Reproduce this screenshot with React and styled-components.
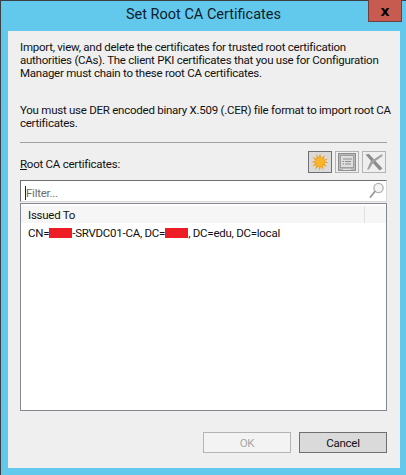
import styled, { createGlobalStyle } from "styled-components"

const GlobalStyle = createGlobalStyle`
    html, body {
        margin: 0;
        padding: 0;
        background: #63C9EC;
    }
`

const Sun = () => (
    <svg width="18" height="18" viewBox="0 0 18 18">
        <path
            d="M9 0L10.2 5L13.8 2.2L12.6 6.4L17.5 5.6L13.4 8.2L18 9.4L13.4 10.2L16 14L12 12.2L12.6 17L10 13.4L8.6 18L7.8 13.4L4 16.4L5.4 12L1 13.6L4.4 10L0 9L4.6 7.8L1.6 4L5.8 5.6L5 1L7.8 4.6Z"
            fill="#F2A31E"
        />
        <circle cx="9" cy="9" r="4.2" fill="#F9B52B" />
    </svg>
)

const Details = () => (
    <svg width="18" height="18" viewBox="0 0 18 18">
        <rect x="0.5" y="0.5" width="17" height="17" fill="#B8B8B8" stroke="#8E8E8E" />
        <rect x="2.5" y="2.5" width="13" height="12" fill="#DEDEDE" stroke="#A0A0A0" />
        <path d="M5 6H14M7 8.5H13M7 11H13" stroke="#8C8C8C" />
        <path d="M4.5 8.5H6M4.5 11H6" stroke="#8C8C8C" />
        <path d="M5 16.5H13" stroke="#E4E4E4" />
    </svg>
)

const Remove = () => (
    <svg width="18" height="18" viewBox="0 0 18 18">
        <path d="M0.5 1.5L4 1L17.5 15.5L14.5 17.5L7 9Z" fill="#8C8C8C" />
        <path d="M17 1L17.5 3L8.5 9.5L4 16.5L2 16.5L5.5 8.5Z" fill="#A2A2A2" />
    </svg>
)

const Magnifier = () => (
    <svg width="15" height="17" viewBox="0 0 15 17">
        <circle cx="9.5" cy="6" r="4.6" fill="#F4F4F4" stroke="#B4B4B4" strokeWidth="1.4" />
        <path d="M5.8 9.5L1.5 15" stroke="#9C9C9C" strokeWidth="2" strokeLinecap="round" />
    </svg>
)

const App = () => {
    return (
        <Window>
            <GlobalStyle />
            <TitleBar>
                <Title>Set Root CA Certificates</Title>
                <CloseButton>x</CloseButton>
            </TitleBar>
            <Body>
                <Description>
                    <p>
                        Import, view, and delete the certificates for trusted root certification<br />
                        authorities (CAs). The client PKI certificates that you use for Configuration<br />
                        Manager must chain to these root CA certificates.
                    </p>
                    <p>
                        You must use DER encoded binary X.509 (.CER) file format to import root CA<br />
                        certificates.
                    </p>
                </Description>
                <Separator />
                <ToolRow>
                    <Label><u>R</u>oot CA certificates:</Label>
                    <Tools>
                        <ToolButton active><Sun /></ToolButton>
                        <ToolButton><Details /></ToolButton>
                        <ToolButton><Remove /></ToolButton>
                    </Tools>
                </ToolRow>
                <FilterBox>
                    <Caret />
                    <FilterText>Filter...</FilterText>
                    <MagnifierSlot><Magnifier /></MagnifierSlot>
                </FilterBox>
                <ListBox>
                    <HeaderRow>
                        <HeaderCell>Issued To</HeaderCell>
                        <HeaderRest />
                    </HeaderRow>
                    <Row>
                        CN=<Redacted width={23} />-SRVDC01-CA, DC=<Redacted width={23} />, DC=edu, DC=local
                    </Row>
                </ListBox>
                <Footer>
                    <DialogButton disabled>OK</DialogButton>
                    <DialogButton primary>Cancel</DialogButton>
                </Footer>
            </Body>
        </Window>
    )
}

const Window = styled.div`
    box-sizing: border-box;
    width: 406px;
    height: 475px;
    display: flex;
    flex-direction: column;
    background: #63C9EC;
    border-left: 1px solid #3A3F44;
    border-top: 1px solid #3A3F44;
    font-family: Roboto, "Noto Sans", sans-serif;
    font-size: 11.5px;
    letter-spacing: -0.25px;
    color: #111;
`

const TitleBar = styled.div`
    height: 30px;
    flex-shrink: 0;
    display: flex;
    align-items: center;
    justify-content: center;
    position: relative;
`

const Title = styled.div`
    font-size: 14.5px;
    letter-spacing: 0;
    color: #10202A;
    margin-bottom: 3px;
`

const CloseButton = styled.div`
    position: absolute;
    top: -1px;
    right: 4px;
    box-sizing: border-box;
    width: 34px;
    height: 22px;
    background: #C75B50;
    border: 1px solid #6E3F40;
    border-top: none;
    display: flex;
    align-items: center;
    justify-content: center;
    font-family: "DejaVu Sans", sans-serif;
    font-weight: 700;
    font-size: 14px;
    line-height: 14px;
    color: #000;
`

const Body = styled.div`
    flex: 1;
    margin: 0 6px 7px 7px;
    background: #EFEFEF;
    padding: 10px 13px 15px 12px;
    display: flex;
    flex-direction: column;
    min-height: 0;
`

const Description = styled.div`
    height: 101px;
    flex-shrink: 0;
    line-height: 13px;
    white-space: nowrap;
    p {
        margin: 0 0 24px;
    }
`

const Separator = styled.div`
    height: 1px;
    background: #A0A0A0;
    flex-shrink: 0;
`

const ToolRow = styled.div`
    display: flex;
    align-items: center;
    justify-content: space-between;
    margin-top: 8px;
    flex-shrink: 0;
`

const Label = styled.div`
    margin-top: 4px;
`

const Tools = styled.div`
    display: flex;
    gap: 3px;
    margin-right: 1px;
`

const ToolButton = styled.div`
    box-sizing: border-box;
    width: 24px;
    height: 22px;
    display: flex;
    align-items: center;
    justify-content: center;
    background: ${props => props.active ? "#DADADA" : "#EFEFEF"};
    border: 1px solid ${props => props.active ? "#707070" : "#B4B4B4"};
`

const FilterBox = styled.div`
    box-sizing: border-box;
    height: 22px;
    margin-top: 7px;
    display: flex;
    align-items: center;
    padding: 4px 2px 0 4px;
    background: #FFF;
    border: 1px solid #D8D8D8;
    border-top-color: #6E6E6E;
    border-left-color: #6E6E6E;
    flex-shrink: 0;
`

const Caret = styled.div`
    width: 1px;
    height: 14px;
    background: #202040;
`

const FilterText = styled.div`
    flex: 1;
    color: #6D6D6D;
`

const MagnifierSlot = styled.div`
    display: flex;
    margin-top: -5px;
`

const ListBox = styled.div`
    flex: 1;
    box-sizing: border-box;
    margin-top: 1px;
    background: #FFF;
    border: 1px solid #828790;
    min-height: 0;
`

const HeaderRow = styled.div`
    display: flex;
    height: 17px;
    margin-top: 2px;
    background: #F6F6F6;
`

const HeaderCell = styled.div`
    box-sizing: border-box;
    width: 344px;
    padding-left: 7px;
    line-height: 19px;
    border-right: 1px solid #E0E0E0;
`

const HeaderRest = styled.div`
    flex: 1;
`

const Row = styled.div`
    display: flex;
    align-items: center;
    white-space: pre;
    height: 17px;
    padding-left: 7px;
    margin-top: 1px;
`

const Redacted = styled.span`
    display: inline-block;
    width: ${props => props.width}px;
    height: 10px;
    background: #EE1C25;
`

const Footer = styled.div`
    display: flex;
    justify-content: flex-end;
    gap: 8px;
    margin-top: 21px;
    flex-shrink: 0;
`

const DialogButton = styled.div`
    box-sizing: border-box;
    width: 88px;
    height: 21px;
    display: flex;
    align-items: center;
    justify-content: center;
    color: ${props => props.disabled ? "#A8A8A8" : "#111"};
    background: ${props => props.disabled ? "#F3F3F3" : "#DADADA"};
    border: 1px solid ${props => props.disabled ? "#B4B4B4" : "#707070"};
`

export default App
